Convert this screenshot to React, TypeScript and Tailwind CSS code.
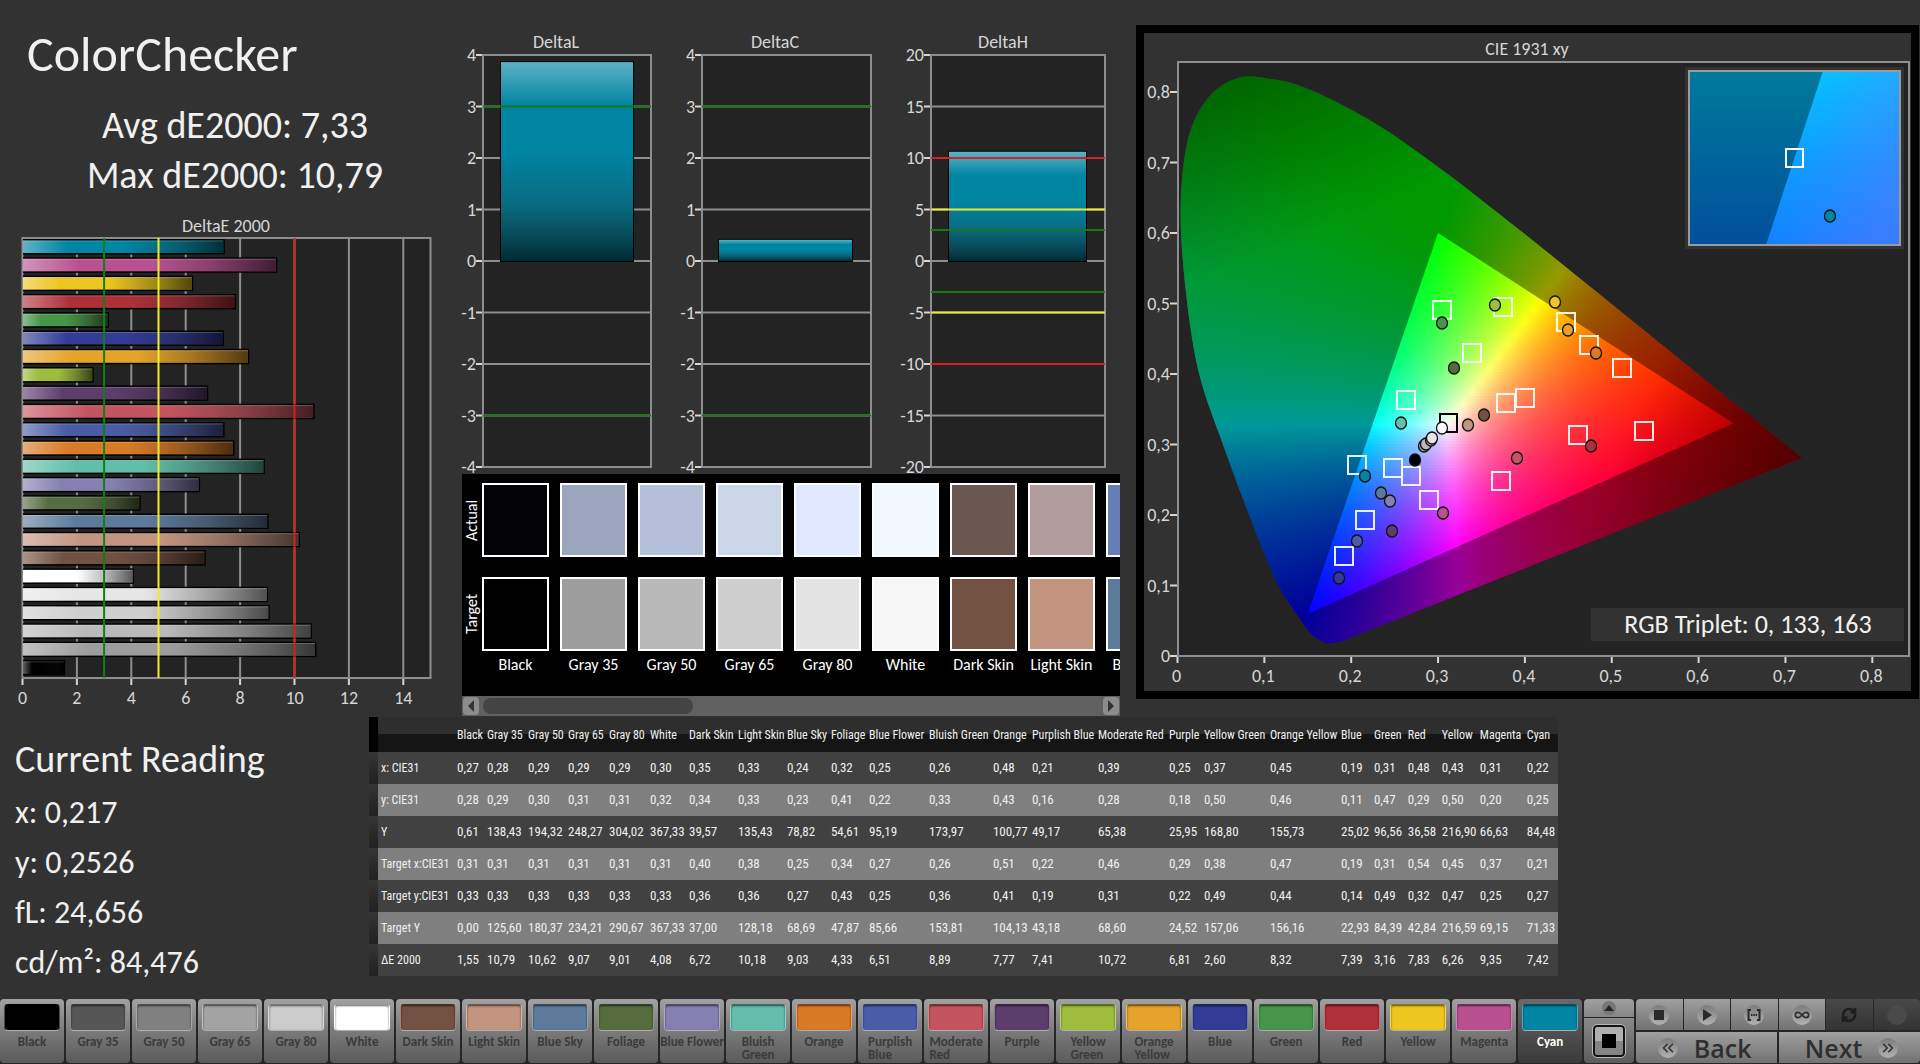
import { ChevronsLeft, ChevronsRight, RefreshCw, Infinity as InfinityIcon } from 'lucide-react';

type Patch = {
  name: string;
  label?: string;
  actual: string;
  target: string;
  bar: string;
  button?: string;
  col: number;
  values: string[];
  dE: number;
};

const patches: Patch[] = [
  { name: 'Black', actual: '#030207', target: '#000000', bar: '#000000', col: 30, values: ['0,27', '0,28', '0,61', '0,31', '0,33', '0,00', '1,55'], dE: 1.55 },
  { name: 'Gray 35', actual: '#9ba5be', target: '#9d9d9d', bar: '#9d9d9d', button: '#565656', col: 41, values: ['0,28', '0,29', '138,43', '0,31', '0,33', '125,60', '10,79'], dE: 10.79 },
  { name: 'Gray 50', actual: '#b4c0d9', target: '#b9b9b9', bar: '#b9b9b9', button: '#808080', col: 40, values: ['0,29', '0,30', '194,32', '0,31', '0,33', '180,37', '10,62'], dE: 10.62 },
  { name: 'Gray 65', actual: '#cbd6e9', target: '#cfcfcf', bar: '#cfcfcf', button: '#a3a3a3', col: 41, values: ['0,29', '0,31', '248,27', '0,31', '0,33', '234,21', '9,07'], dE: 9.07 },
  { name: 'Gray 80', actual: '#dfe8ff', target: '#e3e3e3', bar: '#e6e6e6', button: '#cbcbcb', col: 41, values: ['0,29', '0,31', '304,02', '0,31', '0,33', '290,67', '9,01'], dE: 9.01 },
  { name: 'White', actual: '#f1f8ff', target: '#f6f6f6', bar: '#ffffff', button: '#ffffff', col: 39, values: ['0,30', '0,32', '367,33', '0,31', '0,33', '367,33', '4,08'], dE: 4.08 },
  { name: 'Dark Skin', actual: '#6a5750', target: '#735142', bar: '#735142', col: 49, values: ['0,35', '0,34', '39,57', '0,40', '0,36', '37,00', '6,72'], dE: 6.72 },
  { name: 'Light Skin', actual: '#b29d9e', target: '#c3947f', bar: '#c3947f', col: 49, values: ['0,33', '0,33', '135,43', '0,38', '0,36', '128,18', '10,18'], dE: 10.18 },
  { name: 'Blue Sky', actual: '#667db8', target: '#5d7a9a', bar: '#5d7a9b', col: 44, values: ['0,24', '0,23', '78,82', '0,25', '0,27', '68,69', '9,03'], dE: 9.03 },
  { name: 'Foliage', actual: '#56704a', target: '#576c3c', bar: '#576c43', button: '#566c3e', col: 38, values: ['0,32', '0,41', '54,61', '0,34', '0,43', '47,87', '4,33'], dE: 4.33 },
  { name: 'Blue Flower', actual: '#8489c8', target: '#8580b1', bar: '#8580b1', col: 60, values: ['0,25', '0,22', '95,19', '0,27', '0,25', '85,66', '6,51'], dE: 6.51 },
  { name: 'Bluish Green', label: 'Bluish\nGreen', actual: '#6cc3c8', target: '#63beab', bar: '#63bea9', col: 64, values: ['0,26', '0,33', '173,97', '0,26', '0,36', '153,81', '8,89'], dE: 8.89 },
  { name: 'Orange', actual: '#cb7c45', target: '#d97a26', bar: '#d97a26', col: 39, values: ['0,48', '0,43', '100,77', '0,51', '0,41', '104,13', '7,77'], dE: 7.77 },
  { name: 'Purplish Blue', label: 'Purplish\nBlue', actual: '#4b66b8', target: '#4a5ca6', bar: '#4a5ca6', col: 66, values: ['0,21', '0,16', '49,17', '0,22', '0,19', '43,18', '7,41'], dE: 7.41 },
  { name: 'Moderate Red', label: 'Moderate\nRed', actual: '#b35b70', target: '#c4545f', bar: '#c4545f', col: 71, values: ['0,39', '0,28', '65,38', '0,46', '0,31', '68,60', '10,72'], dE: 10.72 },
  { name: 'Purple', actual: '#5a4378', target: '#5c3d6b', bar: '#5c3d6b', col: 35, values: ['0,25', '0,18', '25,95', '0,29', '0,22', '24,52', '6,81'], dE: 6.81 },
  { name: 'Yellow Green', label: 'Yellow\nGreen', actual: '#a2c25a', target: '#9fbd3d', bar: '#9fbd3d', col: 66, values: ['0,37', '0,50', '168,80', '0,38', '0,49', '157,06', '2,60'], dE: 2.6 },
  { name: 'Orange Yellow', label: 'Orange\nYellow', actual: '#dba550', target: '#e6a32b', bar: '#e6a32b', col: 71, values: ['0,45', '0,46', '155,73', '0,47', '0,44', '156,16', '8,32'], dE: 8.32 },
  { name: 'Blue', actual: '#2f42a4', target: '#323c95', bar: '#323c95', col: 33, values: ['0,19', '0,11', '25,02', '0,19', '0,14', '22,93', '7,39'], dE: 7.39 },
  { name: 'Green', actual: '#4d9c5c', target: '#479549', bar: '#479549', col: 34, values: ['0,31', '0,47', '96,56', '0,31', '0,49', '84,39', '3,16'], dE: 3.16 },
  { name: 'Red', actual: '#a03a45', target: '#b0303a', bar: '#b0303a', col: 34, values: ['0,48', '0,29', '36,58', '0,54', '0,32', '42,84', '7,83'], dE: 7.83 },
  { name: 'Yellow', actual: '#e4c94e', target: '#edc71f', bar: '#edc71f', col: 38, values: ['0,43', '0,50', '216,90', '0,45', '0,47', '216,59', '6,26'], dE: 6.26 },
  { name: 'Magenta', actual: '#b35fa2', target: '#b95190', bar: '#b95190', col: 47, values: ['0,31', '0,20', '66,63', '0,37', '0,25', '69,15', '9,35'], dE: 9.35 },
  { name: 'Cyan', actual: '#2a8cb0', target: '#0085a3', bar: '#0085a3', col: 34, values: ['0,22', '0,25', '84,48', '0,21', '0,27', '71,33', '7,42'], dE: 7.42 },
];

const rowLabels = ['x: CIE31', 'y: CIE31', 'Y', 'Target x:CIE31', 'Target y:CIE31', 'Target Y', 'ΔE 2000'];

const GUTTER = 9;
const LABEL_COL = 76;
const tableUnits = GUTTER + LABEL_COL + patches.reduce((sum, p) => sum + p.col, 0);

const axisText = 'fill-[#d6d6d6] text-[18px]';
const LINE = '#8e8e8e';
const TICK = '#d6d6d6';

/* ---------- DeltaE 2000 horizontal bars ---------- */

function DeltaEChart() {
  const x = (v: number) => 22.5 + v * 27.2;
  const bars = [...patches].reverse();
  return (
    <svg viewBox="0 214 450 502" className="mt-3.5 block h-auto w-full" role="img" aria-label="DeltaE 2000">
      <defs>
        <linearGradient id="sheenX">
          <stop offset="0" stopColor="#fff" stopOpacity="0.38" />
          <stop offset="0.22" stopColor="#fff" stopOpacity="0" />
          <stop offset="0.5" stopColor="#222" stopOpacity="0" />
          <stop offset="0.75" stopColor="#111" stopOpacity="0.3" />
          <stop offset="1" stopColor="#000" stopOpacity="0.65" />
        </linearGradient>
      </defs>
      <text x="226" y="232" textAnchor="middle" className={axisText}>DeltaE 2000</text>
      <rect x="22.5" y="238" width="408" height="440" fill="#232323" stroke={LINE} strokeWidth="2" />
      {[2, 4, 6, 8, 10, 12, 14].map((v) => (
        <line key={v} x1={x(v)} x2={x(v)} y1="238" y2="678" stroke={LINE} strokeWidth="2" />
      ))}
      {bars.map((p, i) => {
        const top = 239 + i * 18.3;
        const w = p.dE * 27.2;
        return (
          <g key={p.name}>
            <rect x="23" y={top} width={w} height="15.5" fill="#000" />
            <rect x="23" y={top + 1.5} width={w - 1.5} height="12.5" fill={p.bar} />
            <rect x="23" y={top + 1.5} width={w - 1.5} height="12.5" fill="url(#sheenX)" />
            <rect x="23" y={top + 1.5} width={w - 1.5} height="1" fill="#fff" opacity="0.2" />
          </g>
        );
      })}
      <line x1={x(3)} x2={x(3)} y1="238" y2="678" stroke="#118011" strokeWidth="2" />
      <line x1={x(5)} x2={x(5)} y1="238" y2="678" stroke="#f0ec2a" strokeWidth="2" />
      <line x1={x(10)} x2={x(10)} y1="238" y2="678" stroke="#d02020" strokeWidth="2" />
      {[0, 2, 4, 6, 8, 10, 12, 14].map((v) => (
        <g key={v}>
          <line x1={x(v)} x2={x(v)} y1="679" y2="685" stroke={TICK} strokeWidth="2" />
          <text x={x(v)} y="704" textAnchor="middle" className={axisText}>{v}</text>
        </g>
      ))}
    </svg>
  );
}

/* ---------- DeltaL / DeltaC / DeltaH ---------- */

type DeltaProps = {
  title: string;
  titleX: number;
  left: number;
  right: number;
  barLeft: number;
  barRight: number;
  max: number;
  value: number;
  limits: { at: number; color: string }[];
};

const GREEN = '#187818';
const YELLOW = '#ecea30';
const RED = '#d02222';

const deltas: DeltaProps[] = [
  { title: 'DeltaL', titleX: 556, left: 483, right: 651, barLeft: 500, barRight: 634, max: 4, value: 3.88, limits: [{ at: 3, color: GREEN }, { at: -3, color: GREEN }] },
  { title: 'DeltaC', titleX: 775, left: 702, right: 871, barLeft: 718, barRight: 853, max: 4, value: 0.43, limits: [{ at: 3, color: GREEN }, { at: -3, color: GREEN }] },
  {
    title: 'DeltaH', titleX: 1003, left: 931, right: 1105, barLeft: 948, barRight: 1087, max: 20, value: 10.7,
    limits: [
      { at: 10, color: RED }, { at: 5, color: YELLOW }, { at: 3, color: GREEN },
      { at: -3, color: GREEN }, { at: -5, color: YELLOW }, { at: -10, color: RED },
    ],
  },
];

function DeltaPlot({ title, titleX, left, right, barLeft, barRight, max, value, limits }: DeltaProps) {
  const y = (v: number) => 261 - (v / max) * 206;
  const steps = [4, 3, 2, 1, 0, -1, -2, -3, -4].map((n) => (n * max) / 4);
  return (
    <g>
      <text x={titleX} y="48" textAnchor="middle" className={axisText}>{title}</text>
      <rect x={left} y="55" width={right - left} height="412" fill="#232323" stroke={LINE} strokeWidth="2" />
      {steps.map((v) => (
        <g key={v}>
          <line x1={left} x2={right} y1={y(v)} y2={y(v)} stroke={LINE} strokeWidth="2" />
          <line x1={left - 7} x2={left - 1} y1={y(v)} y2={y(v)} stroke={TICK} strokeWidth="2" />
          <text x={left - 7} y={y(v) + 6} textAnchor="end" className={axisText}>{v}</text>
        </g>
      ))}
      <rect x={barLeft} y={y(value)} width={barRight - barLeft} height={y(0) - y(value) + 1} fill="#000" />
      <rect x={barLeft + 1} y={y(value) + 1} width={barRight - barLeft - 2} height={y(0) - y(value) - 1} fill="#0085a3" />
      <rect x={barLeft + 1} y={y(value) + 1} width={barRight - barLeft - 2} height={y(0) - y(value) - 1} fill="url(#sheenY)" />
      {limits.map((l) => (
        <line key={l.at} x1={left} x2={right} y1={y(l.at)} y2={y(l.at)} stroke={l.color} strokeWidth="2" />
      ))}
    </g>
  );
}

function DeltaCharts() {
  return (
    <svg viewBox="450 0 678 474" className="block h-auto w-full overflow-visible" role="img" aria-label="DeltaL, DeltaC and DeltaH">
      <defs>
        <linearGradient id="sheenY" x1="0" y1="0" x2="0" y2="1">
          <stop offset="0" stopColor="#fff" stopOpacity="0.36" />
          <stop offset="0.22" stopColor="#fff" stopOpacity="0" />
          <stop offset="0.45" stopColor="#222" stopOpacity="0" />
          <stop offset="0.7" stopColor="#222" stopOpacity="0.25" />
          <stop offset="1" stopColor="#000" stopOpacity="0.68" />
        </linearGradient>
      </defs>
      {deltas.map((d) => <DeltaPlot key={d.title} {...d} />)}
    </svg>
  );
}

/* ---------- Actual / Target swatches ---------- */

function SwatchPanel() {
  return (
    <div className="mr-2 ml-3 flex flex-1 flex-col bg-black text-white">
      <div className="flex flex-1 overflow-hidden pt-[9px]">
        <div className="flex w-5 shrink-0 flex-col items-center gap-5 text-[16px] leading-5">
          <span className="flex h-[74px] rotate-180 items-center justify-center [writing-mode:vertical-rl]">Actual</span>
          <span className="flex h-[74px] rotate-180 items-center justify-center [writing-mode:vertical-rl]">Target</span>
        </div>
        <div className="flex min-w-0 flex-1 gap-[11px] overflow-hidden">
          {patches.slice(0, 9).map((p) => (
            <div key={p.name} className="flex w-[67px] shrink-0 flex-col items-center">
              <div className="h-[74px] w-full border-2 border-white" style={{ backgroundColor: p.actual }} />
              <div className="mt-5 h-[74px] w-full border-2 border-white" style={{ backgroundColor: p.target }} />
              <span className="mt-1 text-[16px] leading-5 whitespace-nowrap">{p.name}</span>
            </div>
          ))}
        </div>
      </div>
      <div className="flex h-5 items-center gap-1 bg-[#606060] px-px">
        <button type="button" aria-label="Scroll left" className="flex h-[18px] w-4 items-center justify-center rounded-sm bg-[#8c8c8c]">
          <svg viewBox="0 0 8 12" className="h-3 w-2"><path d="M7 0v12L1 6z" fill="#333" /></svg>
        </button>
        <div className="h-4 w-[32%] rounded-lg bg-[#444]" />
        <button type="button" aria-label="Scroll right" className="ml-auto flex h-[18px] w-4 items-center justify-center rounded-sm bg-[#8c8c8c]">
          <svg viewBox="0 0 8 12" className="h-3 w-2"><path d="M1 0v12l6-6z" fill="#333" /></svg>
        </button>
      </div>
    </div>
  );
}

/* ---------- CIE 1931 diagram ---------- */

const cx = (x: number) => 1177.5 + x * 868.5;
const cy = (y: number) => 656 - y * 705;

const locus: [number, number][] = [
  [0.172, 0.018], [0.155, 0.03], [0.137, 0.06], [0.114, 0.105], [0.0835, 0.197], [0.053, 0.298], [0.024, 0.405],
  [0.0085, 0.53], [0.0037, 0.64], [0.0125, 0.735], [0.036, 0.793], [0.07, 0.82], [0.11, 0.818], [0.1547, 0.802],
  [0.2296, 0.754], [0.3016, 0.6923], [0.3731, 0.6245], [0.4441, 0.5547], [0.5125, 0.4866], [0.5752, 0.4242],
  [0.627, 0.3725], [0.6658, 0.334], [0.6915, 0.3083], [0.719, 0.281],
];

function smoothPath(points: [number, number][]) {
  const p = points.map(([x, y]) => [cx(x), cy(y)]);
  let d = `M${p[0][0]} ${p[0][1]}`;
  for (let i = 0; i < p.length - 1; i++) {
    const a = p[Math.max(i - 1, 0)];
    const b = p[i];
    const c = p[i + 1];
    const e = p[Math.min(i + 2, p.length - 1)];
    d += `C${b[0] + (c[0] - a[0]) / 6} ${b[1] + (c[1] - a[1]) / 6} ${c[0] - (e[0] - b[0]) / 6} ${c[1] - (e[1] - b[1]) / 6} ${c[0]} ${c[1]}`;
  }
  return `${d}L${cx(0.195)} ${cy(0.024)}Q${cx(0.182)} ${cy(0.017)} ${p[0][0]} ${p[0][1]}Z`;
}

const locusPath = smoothPath(locus);
const trianglePath = `M${cx(0.3)} ${cy(0.6)}L${cx(0.64)} ${cy(0.33)}L${cx(0.15)} ${cy(0.06)}Z`;

const clamp = (v: number) => Math.min(Math.max(v, 0), 1);

// chromaticity -> brightest displayable colour
function chroma(x: number, y: number) {
  const X = x / y;
  const Z = (1 - x - y) / y;
  const lin = [
    3.2406 * X - 1.5372 - 0.4986 * Z,
    -0.9689 * X + 1.8758 + 0.0415 * Z,
    0.0557 * X - 0.204 + 1.057 * Z,
  ].map((v) => Math.max(v, 0));
  const peak = Math.max(...lin);
  const redFade = 1 - 0.45 * clamp((x - y * 0.4 - 0.39) / 0.2);
  const greenFade = 1 - 0.32 * clamp((y - x * 0.5 - 0.52) / 0.25);
  const rgb = lin.map((v) => Math.round(255 * (v / peak) * redFade * greenFade));
  return `rgb(${rgb.join(',')})`;
}

const STRIP = 3;
const strips = Array.from({ length: 190 }, (_, i) => {
  const top = 75 + i * STRIP;
  const y = Math.max((656 - top - STRIP / 2) / 705, 0.005);
  const stops = Array.from({ length: 75 }, (_, n) => chroma(n / 100, y));
  return { top, stops };
});

const targetMarks: [number, number][] = [
  [1442, 309], [1503, 306], [1472, 352], [1566, 321], [1589, 344], [1622, 367], [1525, 397], [1506, 402], [1406, 399],
  [1357, 464], [1393, 467], [1411, 475], [1429, 499], [1501, 480], [1365, 519], [1344, 555], [1578, 434], [1644, 430],
];

const readings: [number, number, string][] = [
  [1495, 304, '#9fbd3d'], [1442, 322, '#479549'], [1454, 367, '#576c3c'], [1555, 301, '#edc71f'], [1568, 329, '#e6a32b'],
  [1596, 352, '#d97a26'], [1401, 422, '#63beab'], [1484, 414, '#735142'], [1468, 424, '#c3947f'], [1424, 445, '#9d9d9d'],
  [1426, 443, '#b9b9b9'], [1431, 439, '#cfcfcf'], [1432, 437, '#e6e6e6'], [1442, 427, '#ffffff'], [1415, 459, '#000000'],
  [1365, 475, '#0085a3'], [1381, 492, '#5d7a9a'], [1390, 500, '#8580b1'], [1392, 530, '#5c3d6b'], [1443, 512, '#b95190'],
  [1517, 457, '#c4545f'], [1357, 540, '#4a5ca6'], [1339, 577, '#323c95'], [1591, 445, '#b0303a'],
];

const comma = (v: number) => (v === 0 ? '0' : `0,${v}`);

function CieChart() {
  return (
    <svg viewBox="1144 33 767 658" className="block h-auto w-full bg-[#323232]" role="img" aria-label="CIE 1931 xy">
      <defs>
        <clipPath id="locus"><path d={locusPath} /></clipPath>
        {strips.map((s, i) => (
          <linearGradient key={s.top} id={`s${i}`} gradientUnits="userSpaceOnUse" x1={cx(0)} x2={cx(0.74)} y1="0" y2="0">
            {s.stops.map((c, n) => <stop key={n} offset={n / 74} stopColor={c} />)}
          </linearGradient>
        ))}
        <linearGradient id="insetDark" x1="0" y1="0" x2="0" y2="1">
          <stop offset="0" stopColor="#007a9b" />
          <stop offset="1" stopColor="#004f9b" />
        </linearGradient>
        <linearGradient id="insetBright" x1="0" y1="0" x2="0" y2="1">
          <stop offset="0" stopColor="#00c8ff" />
          <stop offset="1" stopColor="#0084ff" />
        </linearGradient>
        <linearGradient id="insetTint" gradientUnits="userSpaceOnUse" x1="1790" y1="100" x2="1910" y2="160">
          <stop offset="0" stopColor="#5a78ff" stopOpacity="0" />
          <stop offset="1" stopColor="#5a78ff" stopOpacity="0.6" />
        </linearGradient>
      </defs>
      <text x="1527" y="55" textAnchor="middle" className={axisText}>CIE 1931 xy</text>
      <rect x="1178" y="62" width="731" height="594" fill="#232323" stroke={LINE} strokeWidth="2" />
      <g clipPath="url(#locus)">
        {strips.map((s, i) => (
          <rect key={s.top} x="1178" y={s.top} width="643" height={STRIP} fill={`url(#s${i})`} shapeRendering="crispEdges" />
        ))}
        <path d={`M1178 60H1909V656H1178Z${trianglePath}`} fillRule="evenodd" fill="#000" opacity="0.4" />
      </g>

      {[0, 1, 2, 3, 4, 5, 6, 7, 8].map((v) => (
        <g key={v}>
          <line x1={cx(v / 10)} x2={cx(v / 10)} y1="657" y2="663" stroke={TICK} strokeWidth="2" />
          <text x={cx(v / 10) - 1} y="682" textAnchor="middle" className={axisText}>{comma(v)}</text>
          <line x1="1170" x2="1177" y1={cy(v / 10)} y2={cy(v / 10)} stroke={TICK} strokeWidth="2" />
          <text x="1170" y={cy(v / 10) + 6} textAnchor="end" className={axisText}>{comma(v)}</text>
        </g>
      ))}

      {targetMarks.map(([x, y]) => (
        <rect key={`${x}-${y}`} x={x - 9} y={y - 8} width="18" height="18" fill="none" stroke="#fff" strokeOpacity="0.9" strokeWidth="2" />
      ))}
      <rect x="1440" y="414" width="17" height="18" fill="none" stroke="#000" strokeWidth="2" />
      {readings.map(([x, y, c]) => (
        <ellipse key={`${x}-${y}`} cx={x} cy={y + 1} rx="5.5" ry="6" fill={c} stroke="#111" strokeWidth="1.3" />
      ))}

      <rect x="1685" y="67" width="219" height="182" fill="#323232" />
      <rect x="1689" y="71" width="211" height="174" fill="url(#insetDark)" />
      <path d="M1823 71H1900V245H1766Z" fill="url(#insetBright)" />
      <path d="M1823 71H1900V245H1766Z" fill="url(#insetTint)" />
      <rect x="1689" y="71" width="211" height="174" fill="none" stroke="#9a9a9a" strokeWidth="2" />
      <rect x="1786" y="149" width="17" height="18" fill="none" stroke="#fff" strokeWidth="2" />
      <ellipse cx="1830" cy="216" rx="5.5" ry="6" fill="#0085a3" stroke="#111" strokeWidth="1.3" />

      <rect x="1591" y="608" width="313" height="33" fill="#323232" />
      <text x="1748" y="633" textAnchor="middle" className="fill-[#f0f0f0] text-[26px]">RGB Triplet: 0, 133, 163</text>
    </svg>
  );
}

/* ---------- Data table ---------- */

function ReadingsTable() {
  const pct = (n: number) => ({ width: `${(n / tableUnits) * 100}%` });
  return (
    <table className="w-full table-fixed border-collapse text-left font-['Roboto_Condensed','Roboto',sans-serif] text-[13px] text-[#f0f0f0]">
      <colgroup>
        <col style={pct(GUTTER)} />
        <col style={pct(LABEL_COL)} />
        {patches.map((p) => <col key={p.name} style={pct(p.col)} />)}
      </colgroup>
      <thead>
        <tr className="h-[35px] bg-linear-to-b from-[#2e2e2e] from-50% to-[#151515] to-50%">
          <td className="bg-black p-0" />
          <td className="p-0" />
          {patches.map((p) => (
            <th key={p.name} scope="col" className="p-0 pl-[3px] text-xs font-normal whitespace-nowrap">{p.name}</th>
          ))}
        </tr>
      </thead>
      <tbody>
        {rowLabels.map((label, r) => (
          <tr key={label} className="h-8 odd:bg-[#414141] even:bg-[#7f7f7f]">
            <td className="bg-linear-to-b from-[#363636] to-[#202020] p-0" />
            <th scope="row" className="p-0 pl-[3px] text-xs font-normal whitespace-nowrap">{label}</th>
            {patches.map((p) => (
              <td key={p.name} className="p-0 pl-[3px] whitespace-nowrap">{p.values[r]}</td>
            ))}
          </tr>
        ))}
      </tbody>
    </table>
  );
}

/* ---------- Bottom toolbar ---------- */

const face = 'bg-linear-to-b from-[#a2a2a2] via-[#7b7b7b] to-[#5a5a5a]';
const navFace = 'flex items-center justify-center bg-linear-to-b from-[#a0a0a0] to-[#727272] text-[#2f2f2f]';
const darkFace = 'flex items-center justify-center bg-linear-to-b from-[#484848] to-[#343434] text-[#1e1e1e]';
const knob = 'flex size-5 items-center justify-center rounded-full bg-linear-to-b from-[#7c7c7c] to-[#b2b2b2]';

function Toolbar() {
  return (
    <div className="mt-auto flex h-[65px] gap-[2px] bg-[#262626] pb-px">
      <div className="grid flex-[1583] grid-cols-24 gap-[2px]">
        {patches.map((p) => {
          const active = p.name === 'Cyan';
          return (
            <button
              key={p.name}
              type="button"
              aria-pressed={active}
              className={`flex min-w-0 flex-col items-center rounded-[4px] pt-[5px] text-[13px] leading-[13px] font-bold ${
                active ? 'bg-linear-to-b from-[#6a6a6a] to-[#3a3a3a] text-white' : `${face} text-[#3b3b3b]`}`}
            >
              <span
                className="h-[27px] w-14 rounded-[4px] border border-b-[#b0b0b0] border-t-black/40 border-x-white/30 shadow-[inset_0_1px_2px_rgba(0,0,0,0.6)]"
                style={{ backgroundColor: p.button ?? p.target }}
              />
              <span className="mt-1 text-left whitespace-pre">{p.label ?? p.name}</span>
            </button>
          );
        })}
      </div>

      <div className="flex flex-[50] flex-col gap-px">
        <button type="button" aria-label="Expand" className="flex h-[18px] items-center justify-center rounded-t-[4px] bg-linear-to-b from-[#a0a0a0] to-[#868686]">
          <span className="flex size-[14px] items-center justify-center rounded-full bg-[#777]">
            <svg viewBox="0 0 10 6" className="h-1.5 w-2.5"><path d="M5 0l5 6H0z" fill="#262626" /></svg>
          </span>
        </button>
        <button type="button" aria-label="Pattern window" className="flex flex-1 items-center justify-center rounded-b-[4px] bg-linear-to-b from-[#8a8a8a] to-[#5c5c5c]">
          <span className="flex size-8 items-center justify-center rounded-[4px] border-2 border-[#141414] bg-linear-to-b from-[#b0b0b0] from-50% to-[#858585] to-50% outline outline-[#b8b8b8]">
            <span className="size-3.5 bg-black" />
          </span>
        </button>
      </div>

      <div className="flex flex-[284] flex-col gap-[2px]">
        <div className="grid h-[31px] grid-cols-6 gap-px">
          <button type="button" aria-label="Stop" className={`${navFace} rounded-tl-[4px]`}>
            <span className={knob}><span className="size-2.5 bg-[#2a2a2a]" /></span>
          </button>
          <button type="button" aria-label="Play" className={navFace}>
            <span className={knob}>
              <svg viewBox="0 0 10 12" className="h-3 w-2.5"><path d="M1 0l9 6-9 6z" fill="#2a2a2a" /></svg>
            </span>
          </button>
          <button type="button" aria-label="Read series" className={navFace}>
            <span className={knob}>
              <svg viewBox="0 0 14 12" className="h-3 w-3.5" fill="none" stroke="#2a2a2a" strokeWidth="2">
                <path d="M4 1H1.5v10H4M10 1h2.500v10H10" />
                <path d="M4 6h1.500M6.300 6h1.500M8.600 6h1.500" />
              </svg>
            </span>
          </button>
          <button type="button" aria-label="Read continuously" className={navFace}>
            <span className={knob}><InfinityIcon className="size-4" strokeWidth={2.5} /></span>
          </button>
          <button type="button" aria-label="Refresh" className={darkFace}>
            <RefreshCw className="size-4" strokeWidth={4} />
          </button>
          <button type="button" aria-label="Record" className={`${darkFace} rounded-tr-[4px]`}>
            <span className="size-5 rounded-full bg-[#4a4a4a]" />
          </button>
        </div>
        <div className="grid flex-1 grid-cols-2 gap-[2px] font-['Open_Sans','Noto_Sans',sans-serif] text-[25px] leading-7 font-semibold">
          <button type="button" className={`${navFace} gap-4 rounded-bl-[4px] pr-1`}>
            <span className={knob}><ChevronsLeft className="size-[18px]" /></span>
            Back
          </button>
          <button type="button" className={`${navFace} gap-4 rounded-br-[4px] pl-1`}>
            Next
            <span className={knob}><ChevronsRight className="size-[18px]" /></span>
          </button>
        </div>
      </div>
    </div>
  );
}

export default function App() {
  return (
    <div className="flex min-h-screen flex-col bg-[#323232] font-['Carlito','Lato',sans-serif] text-[#f0f0f0]">
      <div className="grid grid-cols-[450fr_678fr_792fr]">
        <section className="min-w-0 pt-6">
          <h1 className="pl-[27px] text-[50px] leading-[60px]">ColorChecker</h1>
          <div className="mt-4 pl-5 text-center text-[38px] leading-[50px]">
            <p>Avg dE2000: 7,33</p>
            <p>Max dE2000: 10,79</p>
          </div>
          <DeltaEChart />
        </section>

        <section className="flex min-w-0 flex-col">
          <DeltaCharts />
          <SwatchPanel />
        </section>

        <section className="min-w-0 pt-[25px] pr-px pl-2">
          <div className="border-8 border-black">
            <CieChart />
          </div>
        </section>
      </div>

      <div className="grid grid-cols-[369fr_1189fr_362fr] pt-px">
        <section className="pt-[17px] pl-[15px] text-[32px] leading-[50px]">
          <h2 className="mb-1 text-[38px]">Current Reading</h2>
          <p>x: 0,217</p>
          <p>y: 0,2526</p>
          <p>fL: 24,656</p>
          <p>cd/m²: 84,476</p>
        </section>
        <section className="min-w-0">
          <ReadingsTable />
        </section>
      </div>

      <Toolbar />
    </div>
  );
}
